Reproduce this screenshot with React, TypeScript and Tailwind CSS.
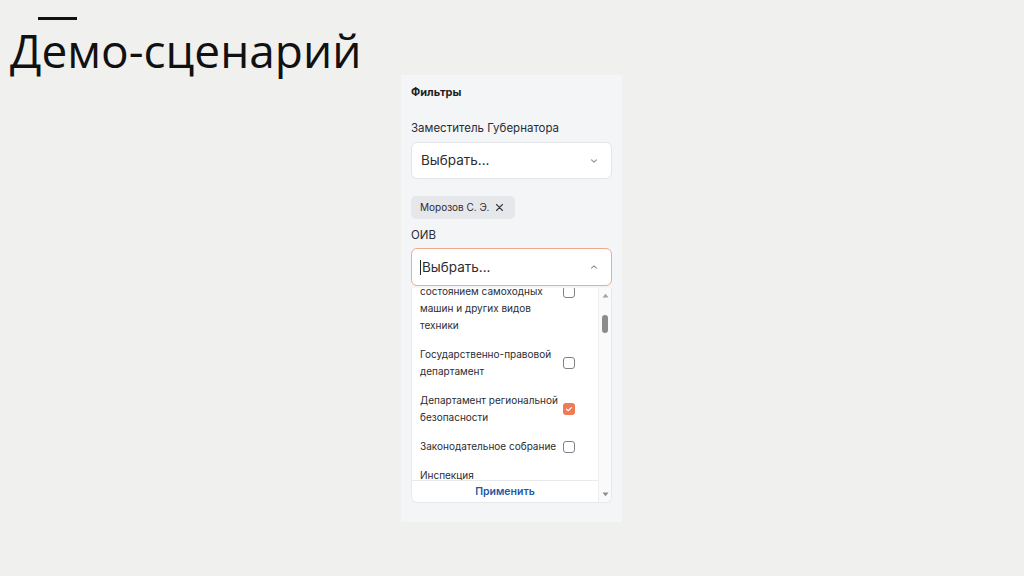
import React from "react";

const ChevronDown = () => (
  <svg width="10" height="10" viewBox="0 0 10 10" fill="none" stroke="#8a8f98" strokeWidth="1.1" strokeLinecap="round" strokeLinejoin="round">
    <path d="M2.5 3.8 5 6.2 7.5 3.8" />
  </svg>
);
const ChevronUp = () => (
  <svg width="10" height="10" viewBox="0 0 10 10" fill="none" stroke="#8a8f98" strokeWidth="1.1" strokeLinecap="round" strokeLinejoin="round">
    <path d="M2.5 6.2 5 3.8 7.5 6.2" />
  </svg>
);

const Box = ({ checked }: { checked?: boolean }) =>
  checked ? (
    <div className="w-[12px] h-[12px] rounded-[3px] bg-[#f07a55] flex items-center justify-center shrink-0">
      <svg width="8" height="8" viewBox="0 0 8 8" fill="none" stroke="#fff" strokeWidth="1.2" strokeLinecap="round" strokeLinejoin="round">
        <path d="M1.6 4.2 3.3 5.7 6.4 2.6" />
      </svg>
    </div>
  ) : (
    <div className="w-[12px] h-[12px] rounded-[3px] border border-[#7d828a] bg-white shrink-0" />
  );

const Item = ({ text, checked }: { text: React.ReactNode; checked?: boolean }) => (
  <div className="flex items-center pl-[8px] pr-[23px] py-[6px]">
    <div className="w-[140px] text-[10px] leading-[17px] text-[#2a2d33]">{text}</div>
    <div className="ml-auto">
      <Box checked={checked} />
    </div>
  </div>
);

export default function App() {
  return (
    <div
      className="w-[1024px] h-[576px] bg-[#f0f0ee] relative overflow-hidden"
      style={{ fontFamily: "Inter, 'Noto Sans', sans-serif" }}
    >
      <div className="w-[39px] h-[3px] bg-[#111] ml-[38px] mt-[17px]" />
      <div
        className="ml-[10px] mt-[2px] text-[46px] leading-[56px] text-[#111]"
        style={{ fontFamily: "'Open Sans', 'Noto Sans', sans-serif" }}
      >
        Демо-сценарий
      </div>

      <div className="absolute left-[401px] top-[75px] w-[221px] h-[447px] bg-[#f4f5f7] px-[10px] pt-[10px]">
        <div className="text-[11px] font-bold text-[#1d1f23] leading-[14px]">Фильтры</div>
        <div className="mt-[22px] text-[11.5px] text-[#2a2d33] leading-[14px]">Заместитель Губернатора</div>
        <div className="mt-[7px] h-[37px] bg-white rounded-[6px] border border-[#e3e5e9] flex items-center pl-[9px] pr-[12px]">
          <span className="text-[13.5px] text-[#2a2d33]">Выбрать...</span>
          <span className="ml-auto">
            <ChevronDown />
          </span>
        </div>
        <div className="mt-[17px] inline-flex items-center h-[23px] rounded-[5px] bg-[#e6e7ea] pl-[9px] pr-[11px] gap-[6px]">
          <span className="text-[10px] text-[#2a2d33]">Морозов С. Э.</span>
          <svg width="9" height="9" viewBox="0 0 9 9" stroke="#3a3d44" strokeWidth="1.1" strokeLinecap="round">
            <path d="M1.5 1.5 7.5 7.5M7.5 1.5 1.5 7.5" />
          </svg>
        </div>
        <div className="mt-[9px] text-[11.5px] text-[#2a2d33] leading-[14px]">ОИВ</div>
        <div className="mt-[6px] h-[38px] bg-white rounded-[6px] border border-[#f0a98c] flex items-center pl-[8px] pr-[12px]">
          <span className="w-[1px] h-[15px] bg-[#222] mr-[1px]" />
          <span className="text-[13.5px] text-[#2a2d33]">Выбрать...</span>
          <span className="ml-auto">
            <ChevronUp />
          </span>
        </div>

        <div className="mt-[2px] h-[215px] bg-white rounded-b-[6px] border border-t-0 border-[#e6e8eb] flex overflow-hidden">
          <div className="flex-1 flex flex-col min-w-0">
            <div className="h-[192px] overflow-hidden">
              <div className="-mt-[45px]">
                <Item
                  text={
                    <>
                      Главное управление по
                      <br />
                      надзору за техническим
                      <br />
                      состоянием самоходных
                      <br />
                      машин и других видов
                      <br />
                      техники
                    </>
                  }
                />
                <Item
                  text={
                    <>
                      Государственно-правовой
                      <br />
                      департамент
                    </>
                  }
                />
                <Item
                  checked
                  text={
                    <>
                      Департамент региональной
                      <br />
                      безопасности
                    </>
                  }
                />
                <Item text="Законодательное собрание" />
                <Item text="Инспекция государственного жилищного надзора" />
              </div>
            </div>
            <div className="h-[1px] bg-[#e8eaee]" />
            <div className="flex-1 flex items-center justify-center">
              <span className="text-[10.5px] font-semibold text-[#2457a6]">Применить</span>
            </div>
          </div>
          <div className="w-[13px] bg-[#fafafa] border-l border-[#efefef] flex flex-col items-center pt-[5px] pb-[5px]">
            <svg width="7" height="5" viewBox="0 0 7 5">
              <path d="M0.5 4.5 3.5 0.8 6.5 4.5Z" fill="#a3a3a3" />
            </svg>
            <div className="mt-[17px] w-[6px] h-[18px] rounded-full bg-[#8c8c8c]" />
            <div className="flex-1" />
            <svg width="7" height="5" viewBox="0 0 7 5">
              <path d="M0.5 0.5 3.5 4.2 6.5 0.5Z" fill="#8c8c8c" />
            </svg>
          </div>
        </div>
      </div>
    </div>
  );
}
